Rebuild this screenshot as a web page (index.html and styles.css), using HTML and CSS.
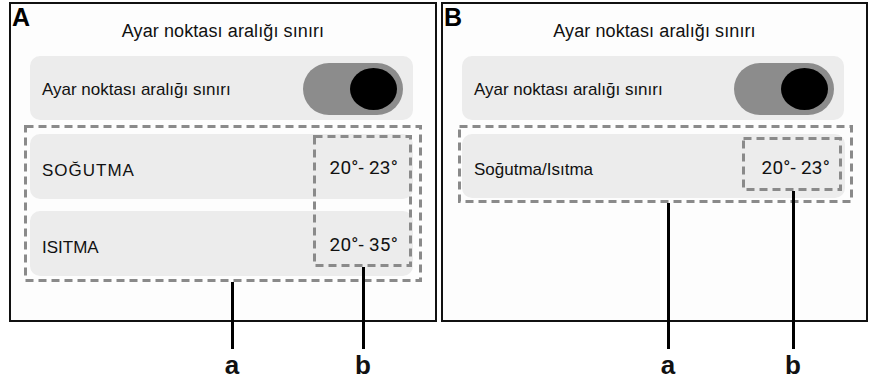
FILE: index.html
```html
<!DOCTYPE html>
<html lang="tr">
<head>
<meta charset="utf-8">
<title>Ayar noktası aralığı sınırı</title>
<link rel="stylesheet" href="styles.css">
</head>
<body>
<div class="figures">
  <div class="figure fig-a">
    <div class="panel">
      <span class="tag">A</span>
      <div class="title">Ayar noktası aralığı sınırı</div>
      <div class="card toggle-row">
        <span class="label">Ayar noktası aralığı sınırı</span>
        <span class="switch"><span class="knob"></span></span>
      </div>
      <div class="group group-a">
        <svg class="dash" width="398" height="157" viewBox="0 0 398 157"><rect x="1.5" y="1.5" width="395" height="154" fill="none" stroke="#8a8a8a" stroke-width="3" stroke-dasharray="8 5"/></svg>
        <div class="card mode-row"><span class="mode mode-cool">SOĞUTMA</span><span class="range">20°- 23°</span></div>
        <div class="card mode-row"><span class="mode">ISITMA</span><span class="range">20°- 35°</span></div>
        <svg class="bbox bbox-a" width="99" height="132" viewBox="0 0 99 132"><rect x="1.5" y="1.5" width="96" height="129" fill="none" stroke="#8a8a8a" stroke-width="3" stroke-dasharray="8 5"/></svg>
      </div>
    </div>
    <div class="callout callout-a1"><span class="stem"></span><span class="letter">a</span></div>
    <div class="callout callout-a2"><span class="stem"></span><span class="letter">b</span></div>
  </div>

  <div class="figure fig-b">
    <div class="panel">
      <span class="tag">B</span>
      <div class="title">Ayar noktası aralığı sınırı</div>
      <div class="card toggle-row">
        <span class="label">Ayar noktası aralığı sınırı</span>
        <span class="switch"><span class="knob"></span></span>
      </div>
      <div class="group group-b">
        <svg class="dash" width="395" height="78" viewBox="0 0 395 78"><rect x="1.5" y="1.5" width="392" height="75" fill="none" stroke="#8a8a8a" stroke-width="3" stroke-dasharray="8 5"/></svg>
        <div class="card mode-row"><span class="mode">Soğutma/Isıtma</span><span class="range">20°- 23°</span></div>
        <svg class="bbox bbox-b" width="100" height="54" viewBox="0 0 100 54"><rect x="1.5" y="1.5" width="97" height="51" fill="none" stroke="#8a8a8a" stroke-width="3" stroke-dasharray="8 5"/></svg>
      </div>
    </div>
    <div class="callout callout-b1"><span class="stem"></span><span class="letter">a</span></div>
    <div class="callout callout-b2"><span class="stem"></span><span class="letter">b</span></div>
  </div>
</div>
</body>
</html>
```

FILE: styles.css
```css
html, body {
  margin: 0;
  padding: 0;
  background: #ffffff;
}

body {
  font-family: "Liberation Sans", Arial, sans-serif;
  color: #111111;
}

.figures {
  display: flex;
  gap: 4px;
  padding: 2px 0 0 9px;
  height: 378px;
}

.figure {
  position: relative;
}

.fig-a .panel { width: 428px; }
.fig-b .panel { width: 427px; }

.panel {
  position: relative;
  box-sizing: border-box;
  height: 320px;
  border: 2px solid #111111;
  background: #fdfdfd;
  display: flex;
  flex-direction: column;
}

.tag {
  position: absolute;
  left: 1px;
  top: 1px;
  font-weight: bold;
  font-size: 25px;
  line-height: 1;
  color: #000;
}

.title {
  margin-top: 16px;
  text-align: center;
  font-size: 18px;
  line-height: 22px;
  letter-spacing: 0.1px;
}

.card {
  background: #ececec;
  border-radius: 10px;
  display: flex;
  align-items: center;
  justify-content: space-between;
  box-sizing: border-box;
}

.toggle-row {
  margin: 14px 22px 0 19px;
  height: 64px;
  padding: 0 10px 0 12px;
}

.label {
  font-size: 17px;
  padding-top: 4px;
}

.switch {
  width: 100px;
  height: 52px;
  border-radius: 26px;
  background: #8c8c8c;
  display: flex;
  align-items: center;
  justify-content: flex-end;
  padding-right: 6px;
  box-sizing: border-box;
  margin-top: 2px;
}

.knob {
  width: 47px;
  height: 42px;
  border-radius: 50%;
  background: #000;
}

.group {
  position: relative;
  margin: 5px 13px 0 13px;
  padding: 9px 9px 5px 6px;
  display: flex;
  flex-direction: column;
  gap: 12px;
}

.group-b {
  margin-left: 15px;
  padding-left: 4px;
  padding-right: 8px;
}

.dash {
  position: absolute;
  left: 0;
  top: 0;
}

.mode-row {
  height: 65px;
  padding: 0 15px 0 12px;
}

.group-b .mode-row { height: 64px; }

.mode {
  font-size: 17px;
  padding-top: 8px;
}

.mode-cool {
  letter-spacing: 1px;
}

.range {
  font-family: Roboto, "Liberation Sans", sans-serif;
  font-size: 19px;
  letter-spacing: 0.2px;
  padding-top: 2px;
}

.bbox {
  position: absolute;
}

.bbox-a { left: 289px; top: 10px; }
.bbox-b { left: 284px; top: 12px; }

.callout {
  position: absolute;
  display: flex;
  flex-direction: column;
  align-items: center;
  width: 40px;
}

.stem {
  width: 3px;
  background: #000;
}

.letter {
  font-weight: bold;
  font-size: 26px;
  line-height: 24px;
  margin-top: 4px;
}

.callout-a1 { left: 203px; top: 280px; }
.callout-a1 .stem { height: 67px; }
.callout-a2 { left: 334px; top: 265px; }
.callout-a2 .stem { height: 82px; }

.callout-b1 { left: 207px; top: 201px; }
.callout-b1 .stem { height: 146px; }
.callout-b2 { left: 332px; top: 189px; }
.callout-b2 .stem { height: 158px; }
```
